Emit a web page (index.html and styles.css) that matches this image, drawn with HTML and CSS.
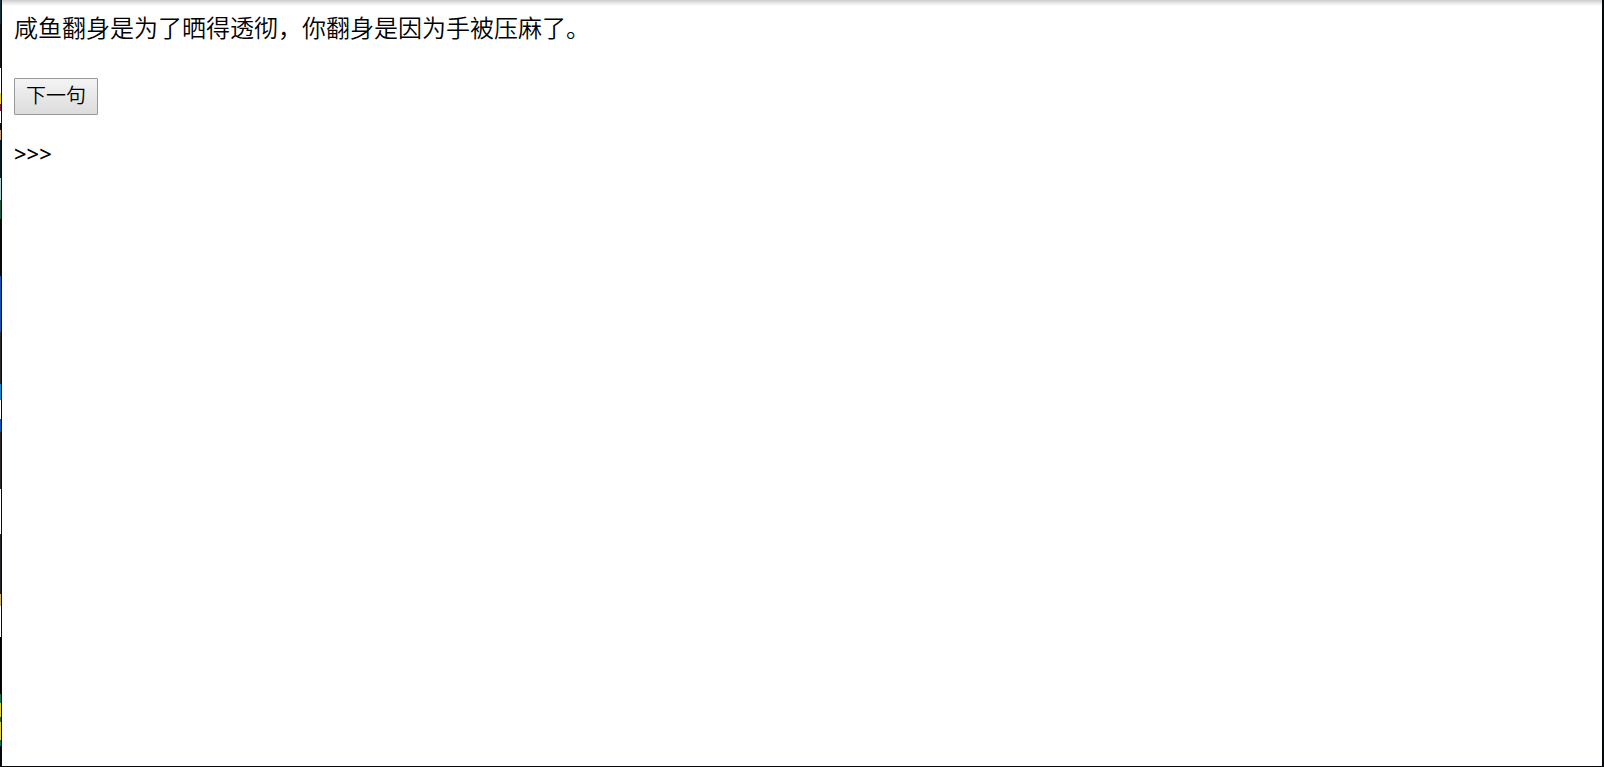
FILE: index.html
```
<!DOCTYPE html>
<html lang="zh-CN">

<head>
    <meta charset="UTF-8">
    <meta name="viewport" content="width=device-width, initial-scale=1.0">
    <title>下一句</title>
    <link rel="stylesheet" href="styles.css">
</head>

<body>
    <div class="desktop"></div>
    <main class="window">
        <p class="sentence">咸鱼翻身是为了晒得透彻，你翻身是因为手被压麻了。</p>
        <button type="button" class="next">下一句</button>
        <p class="prompt">&gt;&gt;&gt;</p>
    </main>
</body>

</html>
```

FILE: styles.css
```
* {
    box-sizing: border-box;
}

body {
    display: flex;
    min-height: 100vh;
    margin: 0;
    background-color: #ffffff;
    color: #000000;
    font-family: "Noto Sans CJK SC", sans-serif;
    font-size: 24px;
    font-weight: 350;
    line-height: 36px;
}

/* desktop showing past the window edge */
.desktop {
    width: 1px;
    background: linear-gradient(
        #17303f 0 24px, #101418 24px 68px, #ffffff 68px 93px,
        #e8cf3c 93px 104px, #7a2030 104px 111px, #ffffff 111px 123px,
        #101418 123px 130px, #c99a78 130px 140px, #0c1c26 140px 178px,
        #a8d0cc 178px 200px, #1d5a3a 200px 219px, #05080c 219px 276px,
        #2050b0 276px 332px, #2a2a2a 332px 384px, #1f86d0 384px 400px,
        #ffffff 400px 419px, #1552b8 419px 432px, #2c2424 432px 489px,
        #ffffff 489px 534px, #22262c 534px 594px, #d8b070 594px 606px,
        #ffffff 606px 637px, #000000 637px 694px, #1b7045 694px 703px,
        #e8cf3c 703px 717px, #1b7045 717px 722px, #e8cf3c 722px 740px,
        #1b7045 740px 746px, #05080c 746px);
}

.window {
    flex: 1;
    padding: 9px 12px;
    border: solid #05080c;
    border-width: 0 2px 1px 1px;
    background: linear-gradient(#cccccc, #e8e8e8 3px, #ffffff 6px) no-repeat;
}

.sentence {
    margin: 0 0 33px;
}

.next {
    display: block;
    height: 37px;
    margin-bottom: 20px;
    padding: 0 11px 3px;
    border: 1px solid #999999;
    border-radius: 1px;
    background: linear-gradient(#f4f4f4, #dcdcdc);
    color: #000000;
    font-family: inherit;
    font-size: 20px;
    font-weight: 350;
    line-height: 30px;
}

.prompt {
    margin: 0;
    font-family: "Noto Sans", sans-serif;
    font-size: 22px;
    font-weight: 500;
}
```
